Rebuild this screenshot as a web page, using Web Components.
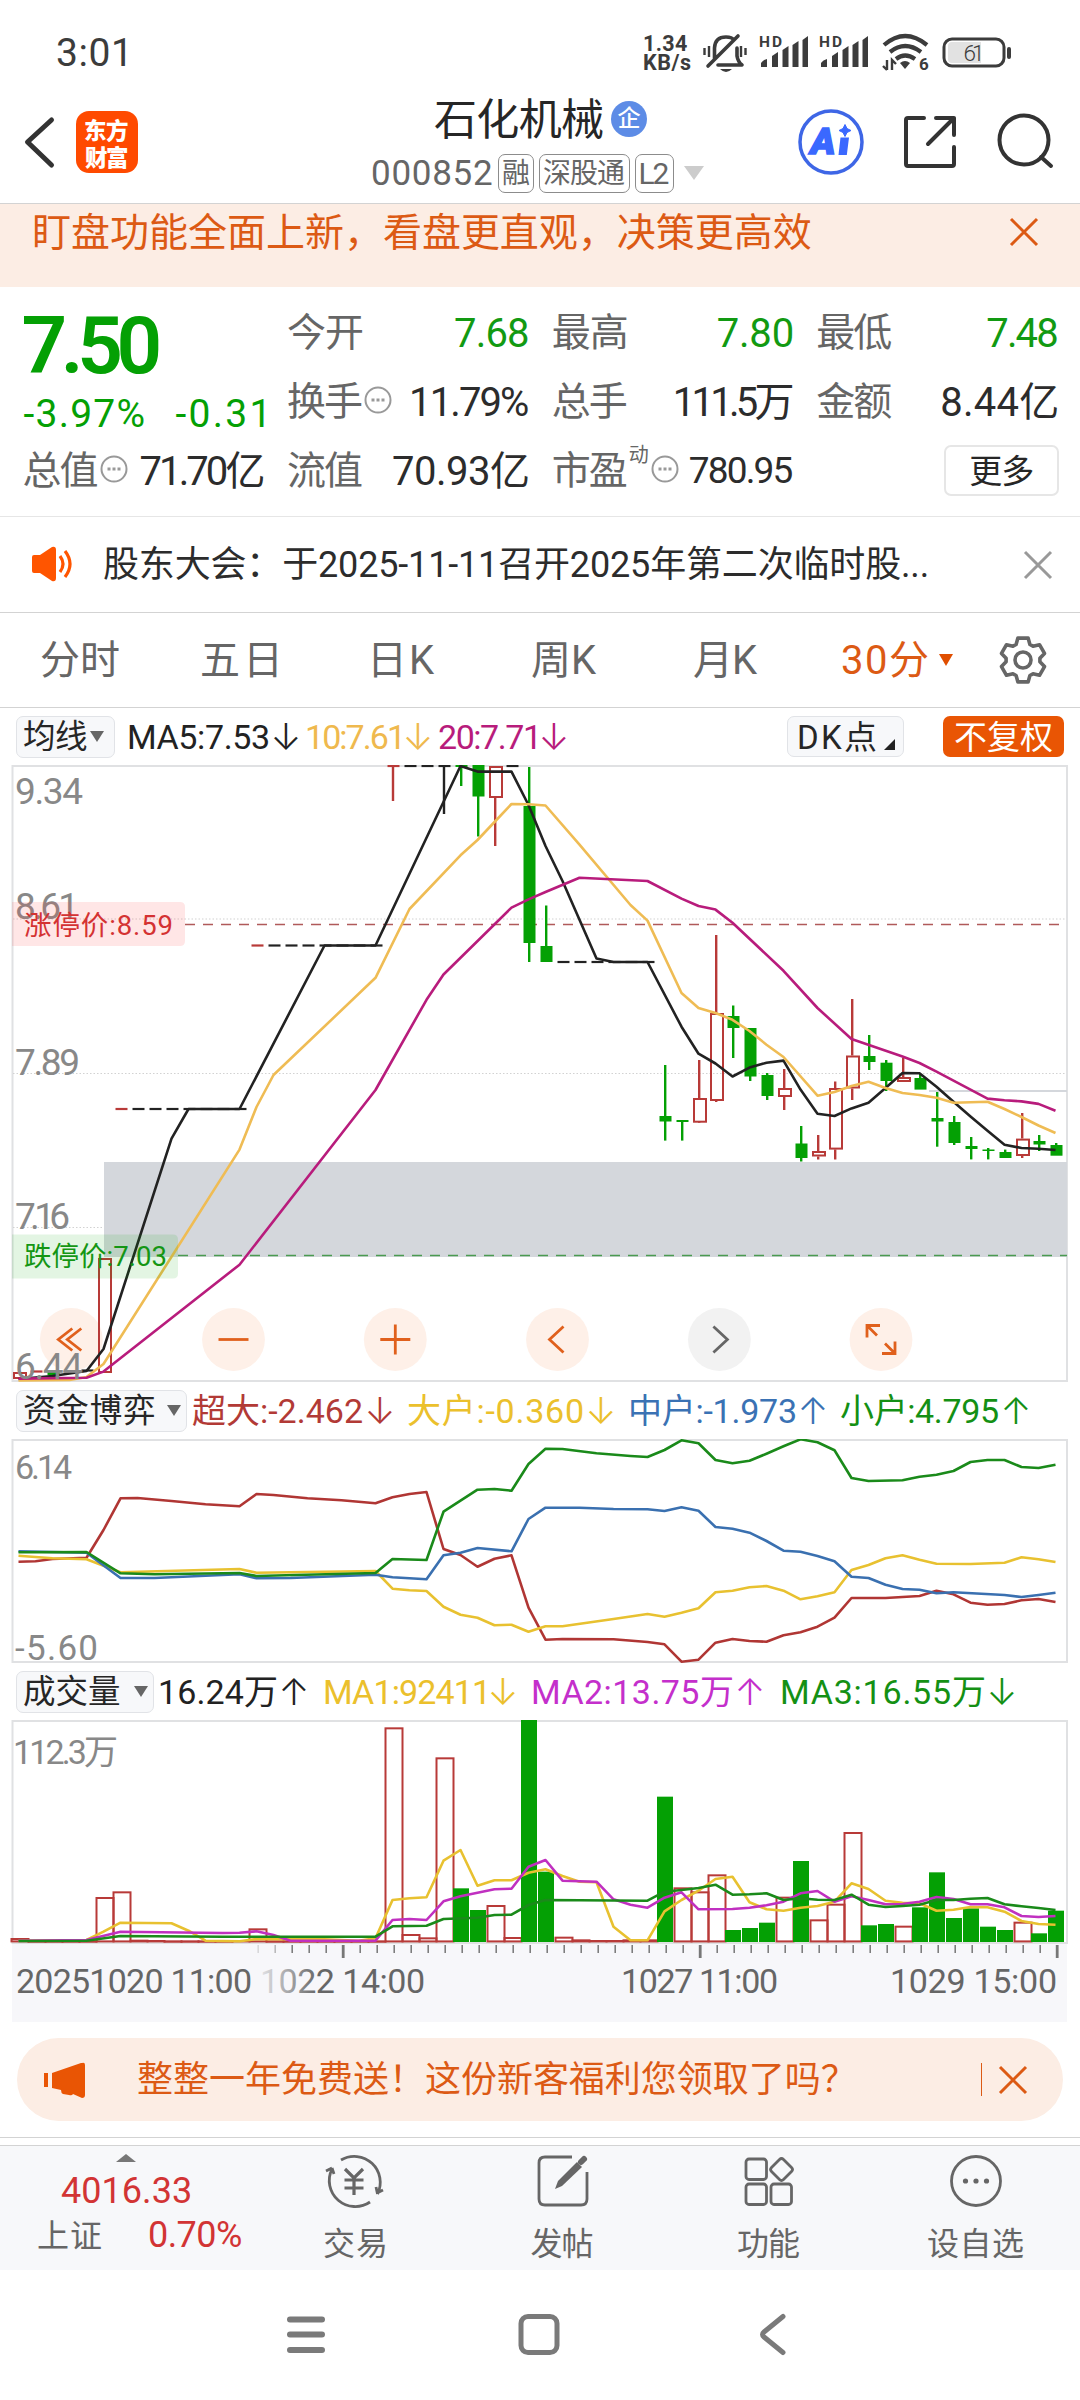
<!DOCTYPE html>
<html lang="zh-CN">
<head>
<meta charset="utf-8">
<title>石化机械 000852</title>
<style>
  body {
    margin: 0; width: 1080px; height: 2400px; overflow: hidden; background: #fff; color: #262626;
    font-family: Roboto, "Noto Sans CJK SC", sans-serif; font-size: 36px;
    display: flex; flex-direction: column;
  }
</style>
</head>
<body>
<status-bar></status-bar>
<stock-header></stock-header>
<notice-banner><fit-text w="776">盯盘功能全面上新，看盘更直观，决策更高效</fit-text></notice-banner>
<quote-panel></quote-panel>
<news-line><fit-text w="823">股东大会：于2025-11-11召开2025年第二次临时股...</fit-text></news-line>
<period-tabs></period-tabs>
<legend-row style="--h:57px">
  <drop-pill w="99" gap="3"><fit-text w="63">均线</fit-text></drop-pill>
  <legend-item w="139" dir="↓" style="margin-left:14px;color:#222">MA5:7.53</legend-item>
  <legend-item w="93" dir="↓" style="margin-left:12px;color:#efb94e">10:7.61</legend-item>
  <legend-item w="97" dir="↓" style="margin-left:12px;color:#b81c7c">20:7.71</legend-item>
  <corner-pill><fit-text w="77">DK点</fit-text></corner-pill>
  <solid-pill><fit-text w="97">不复权</fit-text></solid-pill>
</legend-row>
<price-chart></price-chart>
<legend-row style="--h:57px">
  <drop-pill w="171" gap="13"><fit-text w="130">资金博弈</fit-text></drop-pill>
  <legend-item w="170" dir="↓" style="margin-left:5px;color:#b23a36">超大:-2.462</legend-item>
  <legend-item w="175" dir="↓" style="margin-left:19px;color:#ebc02c">大户:-0.360</legend-item>
  <legend-item w="164" dir="↑" style="margin-left:21px;color:#3a72b4">中户:-1.973</legend-item>
  <legend-item w="157" dir="↑" style="margin-left:19px;color:#149014">小户:4.795</legend-item>
</legend-row>
<flow-chart></flow-chart>
<legend-row style="--h:57px">
  <drop-pill w="138" gap="14"><fit-text w="96">成交量</fit-text></drop-pill>
  <legend-item w="116" dir="↑" style="margin-left:6px;color:#222">16.24万</legend-item>
  <legend-item w="160" dir="↓" style="margin-left:22px;color:#ebc02c">MA1:92411</legend-item>
  <legend-item w="199" dir="↑" style="margin-left:21px;color:#c42fcb">MA2:13.75万</legend-item>
  <legend-item w="202" dir="↓" style="margin-left:23px;color:#149014">MA3:16.55万</legend-item>
</legend-row>
<volume-chart></volume-chart>
<time-axis></time-axis>
<promo-bar><fit-text w="700">整整一年免费送！这份新客福利您领取了吗？</fit-text></promo-bar>
<bottom-tabs></bottom-tabs>
<system-nav></system-nav>

<script>
(() => {
  const UP = '#b83a38', DOWN = '#04a004', ORANGE = '#e95504';

  // Small factory for the purely presentational elements.
  function define(name, css, html) {
    customElements.define(name, class extends HTMLElement {
      constructor() {
        super();
        this.attachShadow({ mode: 'open' }).innerHTML =
          '<style>' + css + '</style>' + (typeof html === 'function' ? html(this) : html);
      }
    });
  }

  const svg = (w, h, body, attrs) =>
    '<svg width="' + w + '" height="' + h + '" viewBox="0 0 ' + w + ' ' + h + '" fill="none" stroke="currentColor" ' +
    (attrs || '') + '>' + body + '</svg>';

  function gear() {
    const pts = [];
    for (let k = 0; k < 6; k++) {
      [[-24, 17], [-13, 22.5], [13, 22.5], [24, 17]].forEach(([d, r]) => {
        const a = (k * 60 - 90 + d) * Math.PI / 180;
        pts.push((24 + r * Math.cos(a)).toFixed(1) + ',' + (25 + r * Math.sin(a)).toFixed(1));
      });
    }
    return svg(48, 50, '<polygon points="' + pts.join(' ') + '"/><circle cx="24" cy="25" r="8"/>',
      'stroke-width="3.6" stroke-linejoin="round"');
  }

  const SIGNAL = svg(50, 34,
    '<path d="M2 32v-4q2-3 6-4v8zM13 32V21l6-4v15zM23.500 32V15l6-4v21zM33.500 32V10l6-4v26zM43.500 32V5l5.500-4v31z" fill="currentColor" stroke="none"/>' +
    '<text x="0" y="12" font-size="15.500" font-weight="700" textLength="23" fill="currentColor" stroke="none">HD</text>');

  const ICONS = {
    back: svg(32, 52, '<path d="M27.500 4 3.500 26l24 23"/>', 'stroke-width="5" stroke-linecap="round" stroke-linejoin="round"'),
    share: svg(54, 54, '<path d="M21 3H5q-2 0-2 2v44q0 2 2 2h44q2 0 2-2V32M33 3h18v17M51 3 25 29"/>', 'stroke-width="4" stroke-linecap="round" stroke-linejoin="round"'),
    search: svg(56, 56, '<circle cx="26" cy="27" r="24.500"/><path d="M43 44l10 9"/>', 'stroke-width="4" stroke-linecap="round"'),
    ai: svg(66, 66, '<circle cx="33" cy="33" r="31" stroke-width="3.500"/>' +
      '<text x="12.500" y="45" font-size="37" font-weight="900" font-style="italic" fill="#3a68ff" stroke="#3a68ff" stroke-width="1.500" textLength="25" lengthAdjust="spacingAndGlyphs">A</text>' +
      '<path d="M42.500 28.500h8.500l-2.200 17.500h-8.300z" fill="#3a68ff" stroke="none"/>' +
      '<path d="M47 15.500l2 4 4 2-4 2-2 4-2-4-4-2 4-2z" fill="#3a68ff" stroke="#3a68ff" stroke-width="1"/>'),
    bell: svg(44, 40, '<path d="M11.500 25V14Q12 3 23 3q6 0 8 3M34 14v8q1 6 5 9H15M5 32 35 2" stroke-width="3.600" stroke-linecap="round" stroke-linejoin="round"/>' +
      '<path d="M1.500 14v7M6 12v11M38 12v11M42.500 14v7" stroke-width="2.400"/><path d="M17 35h12q-6 6-12 0z" fill="currentColor" stroke="none"/>'),
    wifi: svg(48, 38, '<path d="M2 11Q23 -7 45 11M8 18q15-12 31 0M14 25q9-7 19 0" stroke-width="4.200"/>' +
      '<path d="M18 29q5-4 10 0l-5 6z" fill="currentColor" stroke="none"/>' +
      '<path d="M5 26v10M1 32l4 4M10 36V26l4 4" stroke-width="2.400"/>' +
      '<text x="37" y="36" font-size="17" font-weight="700" fill="currentColor" stroke="none">6</text>'),
    battery: svg(72, 32, '<rect x="2" y="2" width="60" height="27" rx="8" stroke-width="3"/>' +
      '<path d="M10 5h29v21H10q-4 0-4-4V9q0-4 4-4z" fill="#e2e2e2" stroke="none"/>' +
      '<path d="M67 12v8" stroke-width="4" stroke-linecap="round"/>' +
      '<text x="21.500" y="23.500" font-size="22.500" font-weight="300" textLength="21" fill="currentColor" stroke="none">61</text>'),
    info: svg(28, 28, '<circle cx="14" cy="14" r="12.500" stroke-width="2"/><path d="M7.500 14h3M12.500 14h3M17.500 14h3" stroke-width="3"/>'),
    close: svg(30, 30, '<path d="M2 2l26 26M28 2 2 28"/>', 'stroke-width="3"'),
    speaker: svg(44, 36, '<path d="M0 11q0-2 2-2h6L20 1q4-1 4 3v28q0 4-4 3L8 27H2q-2 0-2-2z" fill="currentColor" stroke="none"/>' +
      '<path d="M28 10q6 8 0 16M33 5q10 13 0 26" stroke-width="3.200"/>'),
    horn: svg(44, 38, '<path d="M2 12v14" stroke-width="4"/><path d="M8 12 37 2h1q3-1 3 2v30q0 3-3 3l-9-4q-1 2-4 1l-6-1q-2-1-2-4l-9-2z" fill="currentColor" stroke="none"/>'),
    gear: gear(),
    trade: svg(62, 56, '<path d="M17 7a26 26 0 0 1 36.500 34M53 40l6-3M53.500 41 52 34M46 49A26 26 0 0 1 8 16M8 15l-6 3M8 15l2 6"/>' +
      '<path d="M21 16l9 9 9-9M30 25v17M20.500 27h19M20.500 35h19" stroke-width="3.200"/>', 'stroke-width="2.800"'),
    post: svg(52, 54, '<path d="M36 3H9Q3 3 3 9v36q0 6 6 6h36q6 0 6-6V18"/>' +
      '<path d="M19 35l3-8L41 8l5 5-20 19z" fill="currentColor" stroke="none"/><path d="M45 8l3-3" stroke-width="6" stroke-linecap="round"/>', 'stroke-width="2.800"'),
    grid: svg(52, 52, '<rect x="3" y="4" width="20.500" height="20.500" rx="3"/><rect x="3" y="29" width="20.500" height="20.500" rx="3"/>' +
      '<rect x="28" y="29" width="20.500" height="20.500" rx="3"/><path d="M36.500 4.500q2-2 4 0l8 8q2 2 0 4l-8 8q-2 2-4 0l-8-8q-2-2 0-4z"/>', 'stroke-width="2.800"'),
    more: svg(54, 54, '<circle cx="27" cy="27" r="24.500" stroke-width="2.800"/><g fill="currentColor" stroke="none"><circle cx="16.500" cy="27" r="2.600"/><circle cx="27" cy="27" r="2.600"/><circle cx="37.500" cy="27" r="2.600"/></g>')
  };

  define('line-icon', ':host{display:block;flex:none;line-height:0}svg{display:block;overflow:visible}',
    (el) => ICONS[el.getAttribute('name')]);

  define('status-bar',
    ':host{display:flex;height:80px;flex:none;box-sizing:border-box;color:#3c3c3c;padding:0 68px 0 57px}' +
    '.time{font-size:39px;margin-top:29px}' +
    '.right{margin:32px 0 0 auto;display:flex;align-items:flex-start}' +
    '.net{font-size:21.5px;font-weight:700;margin:1px 12px 0 0}' +
    '.net fit-text{line-height:19px}' +
    '.s{margin:3px 0 0 10px}svg{display:block;overflow:visible}',
    '<fit-text class="time" w="68">3:01</fit-text><div class="right">' +
    '<div class="net"><fit-text w="43">1.34</fit-text><fit-text w="47">KB/s</fit-text></div>' +
    '<line-icon name="bell" style="margin-top:2px"></line-icon>' +
    '<div class="s" style="margin-left:12px">' + SIGNAL + '</div><div class="s">' + SIGNAL + '</div>' +
    '<line-icon name="wifi" style="margin:2px 0 0 13px"></line-icon>' +
    '<line-icon name="battery" style="margin:5px -2px 0 12px"></line-icon></div>');

  define('stock-header',
    ':host{display:grid;grid-template-columns:372px 1fr 281px;height:124px;flex:none;box-sizing:border-box;border-bottom:1px solid #d3d3d3}' +
    '.left{display:flex;color:#333;padding:31px 0 0 24px}' +
    '.left line-icon{margin-top:5px}' +
    '.logo{width:62px;height:62px;margin-left:20px;border-radius:13px;background:#ff4a00;color:#fff;box-sizing:border-box;padding:4px 9px;font-size:22.5px;font-weight:900;font-family:"Noto Sans CJK SC"}' +
    '.logo fit-text{line-height:27px}' +
    '.mid{color:#262626}' +
    '.name{display:flex;padding:20px 0 0 63px;font-size:43px}' +
    '.name fit-text{line-height:38px}' +
    '.ent{width:36px;height:36px;border-radius:50%;margin:1px 0 0 8px;background:#5d8ce6;color:#fff;font-size:23px;font-weight:500;line-height:35px;text-align:center}' +
    '.code{display:flex;align-items:center;padding:14px 0 0 0;color:#666;font-size:35px}' +
    '.tag{box-sizing:border-box;height:39px;border:1.5px solid #8c8c8c;border-radius:7px;display:flex;align-items:center;justify-content:center;margin-left:5px;font-size:28px}' +
    'i{border:10px solid transparent;border-top:14px solid #ccc;border-bottom:0;margin-left:10px}' +
    '.right{display:flex;color:#333}',
    '<div class="left"><line-icon name="back"></line-icon><div class="logo"><fit-text w="43">东方</fit-text><fit-text w="43">财富</fit-text></div></div>' +
    '<div class="mid"><div class="name"><fit-text w="168">石化机械</fit-text><div class="ent">企</div></div>' +
    '<div class="code"><fit-text w="120">000852</fit-text><span class="tag" style="width:36px;margin-left:6px"><fit-text w="26">融</fit-text></span>' +
    '<span class="tag" style="width:91px"><fit-text w="81">深股通</fit-text></span>' +
    '<span class="tag" style="width:39px"><fit-text w="28" style="font-size:30px">L2</fit-text></span><i></i></div></div>' +
    '<div class="right"><line-icon name="ai" style="color:#3e66e6;margin:29px 0 0 -1px"></line-icon>' +
    '<line-icon name="share" style="margin:35px 0 0 39px"></line-icon><line-icon name="search" style="margin:33px 0 0 41px"></line-icon></div>');

  define('notice-banner',
    ':host{display:flex;height:83px;flex:none;background:#fcede4;color:#dc5a14;padding:0 41px 0 35px;font-size:39px;justify-content:space-between;box-sizing:border-box}' +
    'slot{display:block;margin-top:5px}line-icon{margin-top:13px}',
    '<slot></slot><line-icon name="close"></line-icon>');

  const cell = (label, value, w, extra) =>
    '<div class="cell"><fit-text class="l" w="74">' + label + '</fit-text>' + (extra || '') +
    '<fit-text class="v" w="' + w + '">' + value + '</fit-text></div>';
  const info = '<line-icon name="info" style="color:#999;margin:-3px 0 0 2px"></line-icon>';

  define('quote-panel',
    ':host{display:grid;grid-template-columns:repeat(4,240px);grid-template-rows:69px 69px 69px;column-gap:24.6px;height:230px;flex:none;box-sizing:border-box;' +
    'padding:11px 0 0 23.500px;border-bottom:1px solid #e6e6e6}' +
    '.price{grid-row:1 / 3;color:#04a004}' +
    '.price .big{font-size:80px;font-weight:600;line-height:94px}' +
    '.chg{display:flex;justify-content:space-between;font-size:39px;margin-top:-2px}' +
    '.cell{display:flex;align-items:center}' +
    '.l{font-size:39px;color:#666}' +
    '.v{font-size:40px;color:#2c2c2c;margin-left:auto}' +
    '.g .v{color:#129a12}' +
    '.dong{font-size:20px;color:#666;margin:-34px 0 0 3px}' +
    '.more{width:115px;height:51px;box-sizing:border-box;border:2px solid #e6e6e6;border-radius:7px;margin-left:auto;display:flex;align-items:center;justify-content:center;font-size:33px;margin-right:-2px}' +
    '.g{display:contents}',
    '<div class="price"><fit-text class="big" w="135">7.50</fit-text><div class="chg"><fit-text w="120">-3.97%</fit-text><fit-text w="88">-0.31</fit-text></div></div>' +
    '<div class="g">' + cell('今开', '7.68', 73) + cell('最高', '7.80', 75) + cell('最低', '7.48', 70) + '</div>' +
    cell('换手', '11.79%', 116, info) + cell('总手', '111.5万', 117) + cell('金额', '8.44亿', 115) +
    cell('总值', '71.70亿', 123, info) + cell('流值', '70.93亿', 135) +
    '<div class="cell"><fit-text class="l" w="74">市盈</fit-text><fit-text class="dong" w="19">动</fit-text>' + info +
    '<fit-text class="v" w="103" style="font-size:37px">780.95</fit-text></div>' +
    '<div class="cell"><div class="more"><fit-text w="63">更多</fit-text></div></div>');

  define('news-line',
    ':host{display:flex;align-items:center;height:96px;flex:none;box-sizing:border-box;border-bottom:1px solid #d3d3d3;padding:0 27px 0 32px;font-size:36px;color:#2c2c2c}' +
    'slot{display:block;margin-left:28px;flex:1}',
    '<line-icon name="speaker" style="color:#ff5500;margin-top:-2px"></line-icon><slot></slot><line-icon name="close" style="color:#999"></line-icon>');

  define('period-tabs',
    ':host{display:flex;align-items:center;height:95px;flex:none;box-sizing:border-box;border-bottom:1px solid #d3d3d3;padding-left:41px;font-size:40px;color:#666}' +
    'i{border:7px solid transparent;border-top:12px solid #e04e00;border-bottom:0;margin-left:11px}',
    '<fit-text w="78">分时</fit-text><fit-text w="75" style="margin-left:83px">五日</fit-text>' +
    '<fit-text w="61" style="margin-left:97px">日K</fit-text><fit-text w="65" style="margin-left:97px">周K</fit-text>' +
    '<fit-text w="64" style="margin-left:97px">月K</fit-text><fit-text w="86" style="margin-left:84px;color:#dc5a14">30分</fit-text><i></i>' +
    '<line-icon name="gear" style="margin-left:46px"></line-icon>');

  define('legend-row', ':host{display:flex;align-items:center;height:var(--h);flex:none;padding:0 16px;box-sizing:border-box;font-size:34px}', '<slot></slot>');

  define('drop-pill',
    ':host{display:flex;align-items:center;height:42px;box-sizing:border-box;flex:none;border:1.5px solid #e1e3e7;border-radius:7px;background:#f7f8fa;padding-left:7px;font-size:32.5px;color:#262626}' +
    'i{border:7px solid transparent;border-top:11px solid #666;border-bottom:0}',
    (el) => '<style>:host{width:' + el.getAttribute('w') + 'px}i{margin-left:' + el.getAttribute('gap') + 'px}</style><slot></slot><i></i>');

  define('legend-item',
    ':host{display:flex;align-items:center;flex:none}' +
    '.a{font-family:Inter,sans-serif;font-size:37px;font-weight:300;width:18px;margin-left:9px;display:flex;justify-content:center;line-height:1}',
    (el) => '<fit-text w="' + el.getAttribute('w') + '">' + el.textContent + '</fit-text><span class="a">' + el.getAttribute('dir') + '</span>');

  define('corner-pill',
    ':host{display:flex;align-items:center;width:117px;height:41px;box-sizing:border-box;flex:none;border:1.5px solid #e1e3e7;border-radius:7px;background:#f7f8fa;margin-left:auto;padding-left:11px;font-size:33px}' +
    'i{border-left:11px solid transparent;border-bottom:11px solid #222;margin:15px 0 0 8px}', '<slot></slot><i></i>');

  define('solid-pill',
    ':host{display:flex;align-items:center;justify-content:center;width:121px;height:41px;flex:none;border-radius:7px;background:#e95504;color:#fff;margin-left:39px;font-size:33px}', '<slot></slot>');

  // ---- charts ------------------------------------------------------------
  // 62 bars of 30 minutes each, 17px apart.
  const X0 = 18.5, STEP = 17;
  const x = (i) => X0 + STEP * i;

  // "i:y i:y ..." -> polyline
  function line(data, color, y, width) {
    const pts = data.split(' ').map((p) => {
      const [i, v] = p.split(':').map(Number);
      return x(i) + ',' + y(v).toFixed(1);
    });
    return '<polyline points="' + pts.join(' ') + '" fill="none" stroke="' + color + '" stroke-width="' + (width || 2.6) + '" stroke-linejoin="round"/>';
  }
  const label = (tx, ty, w, s, size, color) =>
    '<text x="' + tx + '" y="' + ty + '" textLength="' + w + '" font-size="' + size + '" fill="' + (color || '#888') + '">' + s + '</text>';
  const chartCss = ':host{display:block;flex:none;line-height:0}svg{display:block}';
  const frame = (top, height, body) =>
    '<svg width="1080" height="' + height + '" viewBox="0 ' + top + ' 1080 ' + height + '">' +
    '<rect x="12.500" y="' + (top + 1) + '" width="1054.500" height="' + (height - 2) + '" fill="none" stroke="#e0e1e3" stroke-width="2"/>' + body + '</svg>';

  // [index, 'r' | 'g', body top, body bottom, high, low]
  const CANDLES = [
    [0, 'r', 1372, 1379, 1372, 1379], [2, 'g', 1371, 1375, 1371, 1375], [5, 'r', 1258, 1373, 1258, 1373],
    [26, 'g', 765, 767, 765, 786], [27, 'g', 765, 796.5, 765, 836.5], [28, 'r', 766, 798, 766, 846],
    [30, 'g', 806, 943, 767, 962], [31, 'g', 946, 962, 905.5, 962], [38, 'g', 1116, 1121.5, 1065, 1140.6],
    [39, 'g', 1120, 1122, 1120, 1140.6], [40, 'r', 1098, 1122.7, 1060, 1122], [41, 'r', 1013, 1101, 935, 1102],
    [42, 'g', 1016, 1028, 1005.5, 1058], [43, 'g', 1028, 1076.5, 1028, 1081], [44, 'g', 1075, 1096, 1073, 1100],
    [45, 'r', 1088, 1097, 1069, 1110], [46, 'g', 1143.5, 1158, 1126, 1161.5], [47, 'r', 1151, 1156.5, 1135, 1159.5],
    [48, 'r', 1088, 1149.6, 1081.5, 1159.5], [49, 'r', 1055.5, 1088.5, 999, 1100], [50, 'g', 1056, 1062, 1035, 1070],
    [51, 'g', 1062.7, 1081, 1060, 1091], [52, 'r', 1077, 1082, 1058, 1082], [53, 'g', 1078, 1089.6, 1073.7, 1089],
    [54, 'g', 1118, 1121.5, 1092, 1146.7], [55, 'g', 1122, 1143, 1116, 1145], [56, 'g', 1146, 1149, 1137, 1159.4],
    [57, 'g', 1149.5, 1151, 1148, 1159.4], [58, 'g', 1152, 1158, 1149.6, 1158], [59, 'r', 1138.6, 1156, 1113, 1158],
    [60, 'g', 1141, 1144.5, 1135, 1151], [61, 'g', 1145, 1155.7, 1143, 1155]
  ];

  function candles() {
    return CANDLES.map(([i, c, t, b, hi, lo]) => {
      const cx = x(i) + 0.7, col = c === 'r' ? UP : DOWN;
      if (c === 'g') {
        return '<path d="M' + cx + ' ' + hi + 'V' + lo + '" stroke="' + col + '" stroke-width="2.400"/>' +
          '<rect x="' + (cx - 5.7) + '" y="' + t + '" width="12" height="' + (b - t) + '" fill="' + col + '"/>';
      }
      return '<path d="M' + cx + ' ' + hi + 'V' + t + 'M' + cx + ' ' + b + 'V' + lo + '" stroke="' + col + '" stroke-width="2.400"/>' +
        '<rect x="' + (cx - 5.2) + '" y="' + (t + 1) + '" width="12" height="' + (b - t - 2) + '" fill="none" stroke="' + col + '" stroke-width="2"/>';
    }).join('');
  }

  // Runs of unchanged price: flat dashes.
  function flats() {
    let s = '';
    [[1, 1, 1371.5, UP], [3, 3, 1371.5, UP], [4, 4, 1370.5, '#222'], [6, 6, 1109, UP], [7, 13, 1109, '#222'], [14, 14, 945.5, UP],
      [15, 21, 945.5, '#222'], [22, 22, 766, UP], [23, 25, 766, '#222'], [29, 29, 766, '#222'], [32, 37, 962, '#222']].forEach(([a, b, y, c]) => {
      for (let i = a; i <= b; i++) s += '<path d="M' + (x(i) - 5) + ' ' + y + 'h12" stroke="' + c + '" stroke-width="2.200"/>';
    });
    return s + '<path d="M393 765V801" stroke="' + UP + '" stroke-width="2.400"/><path d="M444 765V814" stroke="#222" stroke-width="2.400"/>';
  }

  function controls() {
    const glyphs = [
      [71.300, '<path d="M1-11-13 0 1 11M10-11-4 0 10 11"/>'], [233.500, '<path d="M-15 0H15"/>'],
      [395.300, '<path d="M-15 0H15M0-15V15"/>'], [557.500, '<path d="M6-13-8 0 6 13"/>'],
      [719.400, '<path d="M-6-13 8 0-6 13"/>'],
      [881, '<path d="M-14-2V-14H-1M-14-14-4-4M14 2V14H1M14 14 4 4"/>']
    ];
    return glyphs.map(([cx, g], n) =>
      '<g transform="translate(' + cx + ' 1339.500)" fill="none" stroke="' + (n === 4 ? '#666' : '#e0601c') + '" stroke-width="2.800">' +
      '<circle r="31.400" stroke="none" fill="' + (n === 4 ? '#f2f2f2' : '#fef0e8') + '"/>' + g + '</g>').join('');
  }

  const same = (v) => v;
  define('price-chart', chartCss, frame(765, 617,
    '<path d="M13 919H1066M13 1073.500H1066M13 1227.500H1066" stroke="#d2d2d2" stroke-width="1.200" stroke-dasharray="1.500 2"/>' +
    controls() +
    '<rect x="104" y="1162" width="963" height="95" fill="#d4d7dc"/>' +
    '<path d="M929 1091H1067" stroke="#d4d7dc" stroke-width="2"/>' +
    '<path d="M185 924.500H1067" stroke="#b05a5a" stroke-width="1.600" stroke-dasharray="10 8"/>' +
    '<path d="M178 1255.500H1067" stroke="#4a9a50" stroke-width="1.600" stroke-dasharray="10 8"/>' +
    flats() + candles() +
    line('0:1379 2:1376 4:1371 5:1349 9:1138.6 10:1109 13:1109 18:945.5 21:945.5 26:766 27:771.6 29:771.6 30:805 31:846 32:881 34:958.6 35:962 37:962 39:1026.7 40:1053.7 41:1063.5 42:1076.5 43:1067.6 44:1062.7 45:1060.6 46:1089.6 47:1113.7 48:1116 49:1108.4 50:1102.7 51:1088 52:1073 53:1073.3 54:1086.7 55:1101.8 56:1116.5 57:1130.8 58:1144.7 59:1148 60:1148.8 61:1150', '#222', same) +
    line('0:1380.5 3:1380 4:1377 5:1364 13:1149.6 14:1107 15:1075 21:977.8 23:909 26:855.3 27:840 28:822 29:804 30:804.3 31:805.5 33:844.7 36:905 37:920.6 39:993 40:1008 41:1013 42:1019.8 43:1031 44:1044.7 45:1057 47:1095.7 48:1092 49:1086 50:1081.8 51:1088 52:1093 53:1095 54:1097.8 55:1102.7 57:1101.8 58:1109 59:1117 60:1125.5 61:1133', '#efbc54', same) +
    line('0:1378.6 4:1377.8 5:1371.6 13:1264.7 21:1090 24:999.8 25:974.5 29:907.6 30:899.4 31:892 33:877.8 37:881 39:898.6 40:906 41:909.6 42:922.7 45:970.8 47:1008 49:1039 52:1056.5 53:1063 54:1071.6 57:1098.6 58:1100.2 59:1101.4 60:1103.9 61:1110.8', '#b81c7c', same) +
    label(15, 804, 68, '9.34', 37) + label(15, 919, 64, '8.61', 37) + label(15, 1074.5, 65, '7.89', 37) +
    label(15, 1228.5, 55, '7.16', 37) + label(15, 1378.5, 68, '6.44', 37) +
    '<path d="M12 902H180q5 0 5 5v34q0 5-5 5H12z" fill="#ff5050" fill-opacity=".14"/>' +
    '<path d="M12 1234.500H173q5 0 5 5v34q0 5-5 5H12z" fill="#04a004" fill-opacity=".11"/>' +
    label(24, 934.5, 149, '涨停价:8.59', 27.5, '#d43232') + label(24, 1266, 143, '跌停价:7.03', 27.5, '#149614')));

  const fy = (v) => 1380 + v / 3;
  define('flow-chart', chartCss, frame(1439, 224,
    label(15, 1479, 57, '6.14', 34) + label(15, 1659.5, 83, '-5.60', 35) +
    line('0:545 1:544 2:537 4:533 5:450 6:355 7:354 9:363 11:373 13:379 14:342 15:345 17:355 19:361 21:370 22:352 23:342 24:336 25:507 26:525 27:560 28:536 29:526 30:683 31:779 32:777 35:778 37:786 38:793 39:845 40:839 41:788 42:777 43:783 44:785 45:766 46:757 47:740 48:713 49:654 51:654 53:648 54:632 55:643 56:668 57:674 58:672 59:661 60:657 61:666', '#b03634', fy) +
    line('0:527 2:535 4:538 6:577 13:567 14:578 21:573 22:626 23:631 24:633 25:680 26:704 27:713 28:736 29:734 30:755 31:739 32:739 35:717 37:702 38:710 39:698 40:685 41:637 42:632 43:622 44:618 45:632 46:658 47:649 48:637 49:570 50:555 51:535 52:526 53:539 54:551 56:552 58:548 59:532 60:538 61:546', '#e8c130', fy) +
    line('0:514 4:518 6:594 8:594 13:583 14:595 16:594 21:584 22:592 24:598 25:526 26:518 27:504 29:514 30:417 31:383 33:383 35:387 37:388 38:393 39:382 40:392 41:441 42:446 43:458 44:483 45:512 46:515 47:528 48:544 49:590 50:594 51:614 52:627 53:629 54:640 55:637 58:645 59:651 60:645 61:638', '#3a70b0', fy) +
    line('0:517 4:516 6:580 8:583 13:579 14:588 21:579 22:537 24:540 25:395 26:362 27:329 28:327 29:332 30:252 31:206 32:207 34:220 36:228 37:231 38:210 39:181 40:190 41:240 42:250 43:242 44:221 45:199 46:178 47:187 48:211 49:294 50:303 52:301 53:290 54:284 55:273 56:246 57:240 58:240 59:261 60:264 61:254', '#1a8a1a', fy)));

  const vy = (v) => 1670 + v / 3;
  const VOLUME = ('r807 r814 r814 r814 r814 r684 r667 r812 r813 r814 r814 r814 r814 r813 r778 r814 r814 r814 r814 r814 r814 r814 ' +
    'r175 r795 r805 r265 g655 g720 r708 r804 g150 g605 r803 r811 r813 r813 r811 r811 g380 r655 r667 r616 g780 g774 g758 ' +
    'r683 g573 r751 r704 r489 g766 g762 r770 g712 g607 g744 g715 g770 g780 r758 g790 g722').split(' ');

  const volumes = VOLUME.map((s, i) => {
    const top = vy(Number(s.slice(1))), base = 1942;
    if (s[0] === 'g') return '<rect x="' + (x(i) - 7.5) + '" y="' + top + '" width="16" height="' + (base - top) + '" fill="' + DOWN + '"/>';
    return '<rect x="' + (x(i) - 7) + '" y="' + top + '" width="17" height="' + Math.max(0.4, base - top - 0.6) + '" fill="none" stroke="' + UP + '" stroke-width="2"/>';
  }).join('');

  define('volume-chart', chartCss, frame(1720, 224,
    label(13, 1764, 105, '112.3万', 34) + volumes +
    line('0:812 4:810 5:785 6:758 9:760 10:782 11:812 13:814 14:807 18:808 20:812 21:805 22:690 23:685 24:682 25:572 26:540 27:647 28:631 29:631 30:608 31:598 32:618 33:635 34:637 35:770 36:811 37:811 38:724 39:690 40:662 41:627 42:620 43:697 44:718 45:722 46:713 47:708 48:695 49:640 50:657 51:692 52:698 53:700 54:722 55:719 56:711 57:712 58:725 59:753 60:762 61:764', '#e8c130', vy) +
    line('0:812 4:810 6:785 12:789 13:788 14:784 15:795 16:812 21:812 22:750 23:747 24:750 25:694 26:679 28:658 29:656 30:590 31:570 32:632 34:635 35:688 36:704 37:713 38:683 39:667 40:718 42:717 43:713 44:706 45:695 46:670 47:663 48:695 49:679 50:690 51:703 52:702 53:695 54:681 55:687 56:703 57:703 58:712 59:738 60:741 61:738', '#c030c0', vy) +
    line('0:813 4:812 6:798 12:800 21:800 22:769 24:767 25:747 27:743 28:735 29:734 30:705 31:690 37:692 38:665 39:660 40:654 41:644 42:674 43:673 44:670 45:690 46:685 47:689 48:690 49:674 50:704 51:711 52:708 53:704 54:690 55:690 56:686 57:684 58:703 59:709 60:714 61:720', '#1a8a1a', vy)));

  let ticks = '';
  for (let i = 14; i < 62; i++) {
    const major = i === 19 || i === 40 || i === 61;
    ticks += '<path d="M' + (x(i) + 1.7) + ' 1V' + (major ? 14 : 9) + '" stroke="#777" stroke-width="' + (major ? 2.8 : 1.5) +
      '" opacity="' + (i === 14 ? 0.25 : i === 15 ? 0.5 : 1) + '"/>';
  }
  define('time-axis', chartCss,
    '<svg width="1080" height="78" viewBox="0 0 1080 78"><defs><linearGradient id="f" gradientUnits="userSpaceOnUse" x1="258" x2="318">' +
    '<stop stop-color="#666" stop-opacity=".1"/><stop offset="1" stop-color="#666"/></linearGradient></defs>' +
    '<rect x="12" width="1055" height="78" fill="#f7f7fa"/>' + ticks +
    label(16, 49, 236, '20251020 11:00', 34, '#666') + label(260, 49, 165, '1022 14:00', 34, 'url(#f)') +
    label(621, 49, 157, '1027 11:00', 34, '#666') + label(890, 49, 167, '1029 15:00', 34, '#666') + '</svg>');

  define('promo-bar',
    ':host{display:block;flex:none;height:116px;padding:16px 17px 0;box-sizing:border-box;border-bottom:1px solid #d3d3d3}' +
    '.box{display:flex;align-items:center;height:83px;border-radius:42px;background:#fcede4;color:#dc5a14;font-size:36px;padding:0 35px 0 27px}' +
    'slot{display:block;flex:1;margin-left:50px}.bar{width:1.5px;height:33px;background:#dc5a14;margin-right:16px}',
    '<div class="box"><line-icon name="horn" style="color:' + ORANGE + '"></line-icon><slot></slot><div class="bar"></div><line-icon name="close"></line-icon></div>');

  const tab = (icon, text, w) => '<div class="tab"><span><line-icon name="' + icon + '"></line-icon></span><fit-text w="' + w + '">' + text + '</fit-text></div>';
  define('bottom-tabs',
    ':host{display:grid;grid-template-columns:251px repeat(4,207px);flex:none;height:125px;margin-top:7px;box-sizing:border-box;border-top:1px solid #d3d3d3;background:#f7f8fa;color:#666;font-size:32px}' +
    '.idx{display:flex;flex-direction:column;align-items:center;color:#d23434;font-size:36px}' +
    'i{border:10px solid transparent;border-bottom:8px solid #777;border-top:0;margin-top:8px}' +
    '.big{margin-top:7px}.sub{display:flex;justify-content:space-between;width:203px;margin:1px 0 0 28px;align-items:center}' +
    '.sub :first-child{font-size:32px;color:#666}' +
    '.tab{display:flex;flex-direction:column;align-items:center}.tab span{height:54px;margin-top:8px;display:flex;align-items:center}.tab fit-text{margin-top:16px}',
    '<div class="idx"><i></i><fit-text class="big" w="129">4016.33</fit-text><div class="sub"><fit-text w="63">上证</fit-text><fit-text w="91">0.70%</fit-text></div></div>' +
    tab('trade', '交易', 61) + tab('post', '发帖', 62) + tab('grid', '功能', 61) + tab('more', '设自选', 95));

  define('system-nav', ':host{display:block;flex:1;background:#fff;color:#7a7a7a}svg{display:block}',
    svg(1080, 129, '<path d="M290 49.500h32M290 64.500h32M290 80h32" stroke-width="6" stroke-linecap="round"/>' +
      '<rect x="521" y="46.500" width="36" height="36" rx="7" stroke-width="5"/>' +
      '<path d="M783 46.500 764 62q-3 2.500 0 5L783 82.500" stroke-width="5" stroke-linecap="round"/>'));

  /* <fit-text w="120"> — one line of text whose ink spans w pixels; the
   * difference goes into letter-spacing. Defined last: it measures with the
   * font that its host elements set. */
  const ctx = document.createElement('canvas').getContext('2d');
  customElements.define('fit-text', class extends HTMLElement {
    constructor() {
      super();
      this.attachShadow({ mode: 'open' }).innerHTML =
        '<style>:host{display:block;flex:none;white-space:nowrap;line-height:1.2}' +
        'span{display:block;width:max-content;transform:translateY(1.200px)}</style><span><slot></slot></span>';
    }
    connectedCallback() {
      const cs = getComputedStyle(this);
      const text = this.textContent.trim();
      const w = parseFloat(this.getAttribute('w'));
      const span = this.shadowRoot.querySelector('span');
      ctx.font = cs.fontWeight + ' ' + cs.fontSize + ' ' + cs.fontFamily;
      const m = ctx.measureText(text);
      const bearings = m.width - m.actualBoundingBoxLeft - m.actualBoundingBoxRight;
      span.style.letterSpacing = '0.01px';
      const ink = span.getBoundingClientRect().width - bearings;
      this.style.width = w + 'px';
      span.style.letterSpacing = (w - ink) / Math.max(1, text.length - 1) + 'px';
      span.style.marginLeft = m.actualBoundingBoxLeft + 'px';
    }
  });
})();
</script>
</body>
</html>
